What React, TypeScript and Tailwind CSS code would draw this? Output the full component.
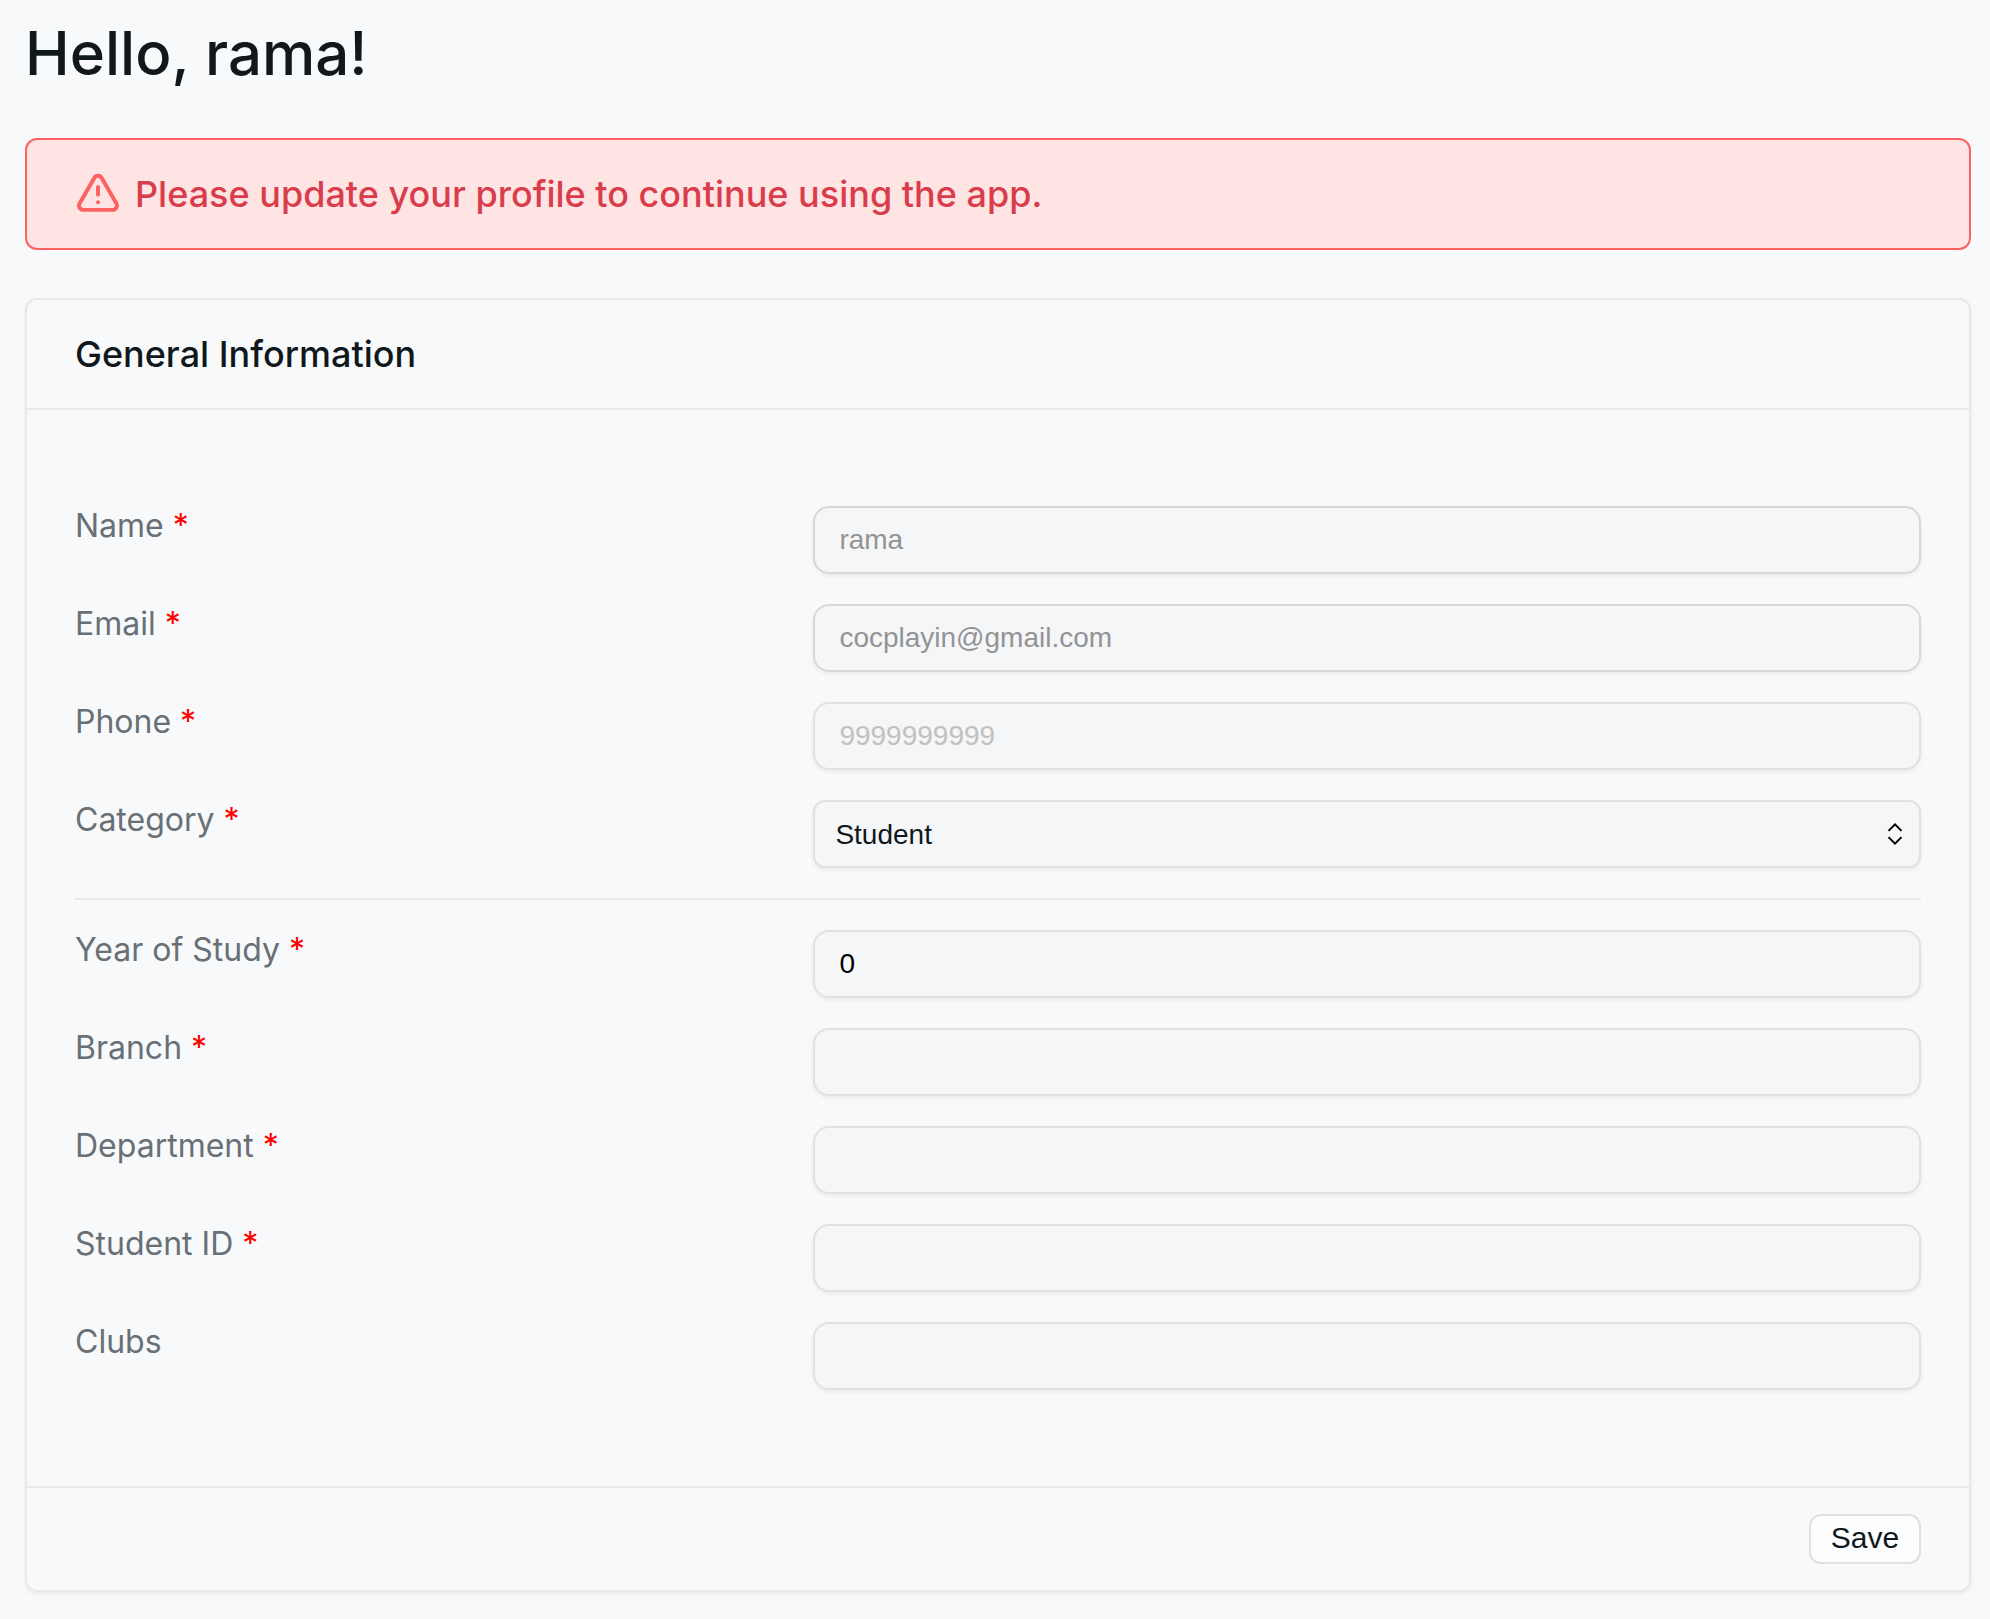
type Field = {
  id: string;
  label: string;
  required?: boolean;
  disabled?: boolean;
  value?: string;
  placeholder?: string;
};

const contact: Field[] = [
  { id: "name", label: "Name", required: true, disabled: true, value: "rama" },
  { id: "email", label: "Email", required: true, disabled: true, value: "cocplayin@gmail.com" },
  { id: "phone", label: "Phone", required: true, placeholder: "9999999999" },
];

const study: Field[] = [
  { id: "year", label: "Year of Study", required: true, value: "0" },
  { id: "branch", label: "Branch", required: true },
  { id: "department", label: "Department", required: true },
  { id: "student-id", label: "Student ID", required: true },
  { id: "clubs", label: "Clubs" },
];

function WarningIcon() {
  return (
    <svg
      viewBox="1.2 0.28 22.53 22.53"
      className="size-12 shrink-0 fill-none stroke-[#ff6060]"
      strokeWidth="1.85"
      strokeLinecap="round"
      strokeLinejoin="round"
      aria-hidden="true"
    >
      <path d="M5.062 19h13.856c1.54 0 2.502-1.667 1.732-3L13.732 4c-.77-1.333-2.694-1.333-3.464 0L3.34 16c-.77 1.333.192 3 1.732 3z" />
      <path d="M12 8.250v3.600M12 15.450h.01" />
    </svg>
  );
}

function FieldLabel({ id, label, required }: { id: string; label: string; required?: boolean }) {
  return (
    <label htmlFor={id} className="w-2/5 text-[32px] leading-10 text-[#687076]">
      {label}
      {required && <span className="text-[#ff0000]"> *</span>}
    </label>
  );
}

function TextField({ field }: { field: Field }) {
  return (
    <div className="flex items-start">
      <FieldLabel id={field.id} label={field.label} required={field.required} />
      <input
        id={field.id}
        type="text"
        defaultValue={field.value}
        placeholder={field.placeholder}
        disabled={field.disabled}
        className="h-[68px] w-3/5 rounded-2xl border-2 border-[#dfe1e3] bg-[#f5f6f8] px-6 font-['Liberation_Sans',sans-serif] text-[28px] text-black shadow-[0_2px_4px_rgba(0,0,0,0.06)] placeholder:text-[#c0c1c2] disabled:border-[#d6d8da] disabled:text-[#929394]"
      />
    </div>
  );
}

export default function App() {
  return (
    <main className="min-h-screen bg-[#f8f9fb] pt-[23px] pr-[19px] pb-7 pl-[25px] font-['Inter',sans-serif] text-[#11181c]">
      <h1 className="text-[60px] leading-[60px] font-medium">Hello, rama!</h1>

      <div
        role="alert"
        className="mt-[55px] flex h-28 items-center gap-3 rounded-xl border-2 border-[#ff6060] bg-[#ffe4e4] px-12"
      >
        <WarningIcon />
        <p className="text-4xl font-medium text-[#d93d4c]">
          Please update your profile to continue using the app.
        </p>
      </div>

      <form
        className="mt-12 rounded-xl border-2 border-[#e6e8ea] shadow-[0_2px_4px_rgba(0,0,0,0.06)]"
        onSubmit={(e) => e.preventDefault()}
      >
        <header className="flex h-[110px] items-center border-b-2 border-[#e6e8ea] px-12">
          <h2 className="text-4xl font-medium">General Information</h2>
        </header>

        <div className="flex flex-col gap-[30px] px-12 py-24">
          {contact.map((field) => (
            <TextField key={field.id} field={field} />
          ))}
          <div className="flex items-start">
            <FieldLabel id="category" label="Category" required />
            <div className="relative w-3/5">
              <select
                id="category"
                defaultValue="Student"
                className="block h-[68px] w-full appearance-none rounded-xl border-2 border-[#dfe1e3] bg-[#f5f6f8] px-5 pt-0.5 font-['Liberation_Sans',sans-serif] text-[28px] text-[#11181c] shadow-[0_2px_4px_rgba(0,0,0,0.06)]"
              >
                <option>Student</option>
                <option>Faculty</option>
              </select>
              <svg
                viewBox="0 0 16 24"
                className="pointer-events-none absolute inset-y-0 right-[18px] my-auto h-6 w-4 fill-none stroke-black stroke-2"
                aria-hidden="true"
              >
                <path d="M1.500 8.900 8 2.400l6.500 6.500M1.500 15.100 8 21.600l6.500-6.500" />
              </svg>
            </div>
          </div>
          <hr className="border-t-2 border-[#e6e8ea]" />
          {study.map((field) => (
            <TextField key={field.id} field={field} />
          ))}
        </div>

        <footer className="flex justify-end border-t-2 border-[#e6e8ea] px-12 py-[26px]">
          <button
            type="submit"
            className="h-[50px] w-28 rounded-xl border-2 border-[#dfe1e3] bg-[#fcfdfe] pb-0.5 font-['Liberation_Sans',sans-serif] text-3xl leading-none"
          >
            Save
          </button>
        </footer>
      </form>
    </main>
  );
}
